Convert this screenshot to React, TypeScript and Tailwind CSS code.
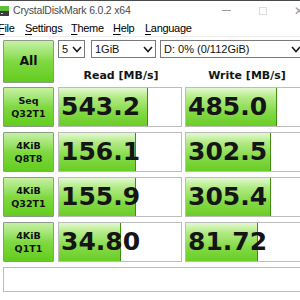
import React from "react";

type Row = {
  top: string;
  bottom: string;
  read: string;
  write: string;
  readFill: number;
  writeFill: number;
};

const rows: Row[] = [
  { top: "Seq", bottom: "Q32T1", read: "543.2", write: "485.0", readFill: 89, writeFill: 91 },
  { top: "4KiB", bottom: "Q8T8", read: "156.1", write: "302.5", readFill: 77, writeFill: 85 },
  { top: "4KiB", bottom: "Q32T1", read: "155.9", write: "305.4", readFill: 77, writeFill: 85 },
  { top: "4KiB", bottom: "Q1T1", read: "34.80", write: "81.72", readFill: 62, writeFill: 72 },
];

const Chevron = () => (
  <svg width="10" height="7" viewBox="0 0 10 7" className="shrink-0">
    <polyline points="1,1 5,5.5 9,1" fill="none" stroke="#1a1a1a" strokeWidth="1.6" />
  </svg>
);

const Select = ({ value, className }: { value: string; className: string }) => (
  <div
    className={`h-[18px] border border-[#7a7a7a] bg-white flex items-center justify-between pl-[3px] pr-[2px] text-[11px] text-[#111] ${className}`}
  >
    <span>{value}</span>
    <Chevron />
  </div>
);

const LabelButton = ({ children, big }: { children: React.ReactNode; big?: boolean }) => (
  <div
    className={`w-[51px] shrink-0 border border-[#8c9a8c] rounded-[1px] bg-gradient-to-b from-[#c6f1a2] via-[#7fd93f] to-[#62cc1c] flex flex-col items-center justify-center font-bold text-[#111] font-['DejaVu_Sans',sans-serif] ${
      big ? "h-[43px] text-[12.5px]" : "h-[40px] text-[9.5px] leading-[13px]"
    }`}
  >
    {children}
  </div>
);

const ValueBox = ({ value, fill, className }: { value: string; fill: number; className: string }) => (
  <div className={`relative w-[124px] h-[40px] shrink-0 border border-[#bcbcbc] bg-white overflow-hidden ${className}`}>
    <div
      className="absolute left-0 top-0 bottom-0 border-r border-[#3f8f12] bg-[linear-gradient(to_bottom,#e4f8d2_0%,#b2eb84_25%,#82d944_65%,#6acd26_100%)]"
      style={{ width: fill }}
    />
    <span className="relative block pl-[2px] leading-[38px] text-[25px] font-bold text-[#151515] font-['DejaVu_Sans',sans-serif]">
      {value}
    </span>
  </div>
);

const MenuItem = ({ label, width, className = "" }: { label: string; width: string; className?: string }) => (
  <span className={`${width} shrink-0 ${className}`}>
    <span className="underline underline-offset-[2px]">{label[0]}</span>
    {label.slice(1)}
  </span>
);

export default function App() {
  return (
    <div className="w-[300px] h-[300px] overflow-hidden bg-white font-['Liberation_Sans',Arial,sans-serif]">
      <div className="w-[320px]">
        {/* title bar */}
        <div className="h-[20px] border-t border-[#4b4b4b] flex items-center">
          <svg width="10" height="12" viewBox="0 0 10 12" className="shrink-0 mt-[1px]">
            <rect x="0" y="1" width="9" height="5" fill="#5fbf3a" />
            <rect x="0" y="6" width="9" height="5" fill="#3c3c3c" />
            <rect x="1" y="8" width="2" height="1" fill="#d0d0d0" />
          </svg>
          <span className="ml-[3px] text-[10.5px] tracking-[-0.2px] text-[#4a4a4a]">CrystalDiskMark 6.0.2 x64</span>
          <div className="ml-auto flex items-center w-[98px] shrink-0">
            <div className="w-[9px] h-px bg-[#9a9a9a]" />
            <div className="ml-[28px] w-[8px] h-[8px] border border-[#dcdcdc]" />
            <span className="ml-[27px] text-[12px] leading-none text-[#9a9a9a]">✕</span>
          </div>
        </div>

        {/* menu bar */}
        <div className="h-[17px] border-b border-[#ececec] flex items-center text-[11px] tracking-[-0.3px] text-[#000]">
          <MenuItem label="File" width="w-[27px]" className="-ml-[2px]" />
          <MenuItem label="Settings" width="w-[46px]" />
          <MenuItem label="Theme" width="w-[42px]" />
          <MenuItem label="Help" width="w-[32px]" />
          <MenuItem label="Language" width="w-[60px]" />
        </div>

        {/* body */}
        <div className="pl-[3px] pt-[3px]">
          <div className="flex">
            <LabelButton big>All</LabelButton>
            <div className="ml-[4px] flex flex-col">
              <div className="flex">
                <Select value="5" className="w-[27px]" />
                <Select value="1GiB" className="ml-[6px] w-[65px]" />
                <Select value="D: 0% (0/112GiB)" className="ml-[4px] w-[144px]" />
              </div>
              <div className="h-[25px] flex items-end text-[11px] leading-[14px] font-bold text-[#151515] font-['DejaVu_Sans',sans-serif]">
                <div className="w-[124px] text-center pl-[2px]">Read [MB/s]</div>
                <div className="ml-[3px] w-[124px] text-center">Write [MB/s]</div>
              </div>
            </div>
          </div>

          <div className="mt-[4px] flex flex-col gap-[5px]">
            {rows.map((r) => (
              <div key={r.top + r.bottom} className="flex">
                <LabelButton>
                  <span>{r.top}</span>
                  <span>{r.bottom}</span>
                </LabelButton>
                <ValueBox value={r.read} fill={r.readFill} className="ml-[4px]" />
                <ValueBox value={r.write} fill={r.writeFill} className="ml-[3px]" />
              </div>
            ))}
          </div>

          {/* comment */}
          <div className="mt-[5px] w-[306px] h-[25px] border border-[#bcbcbc] bg-white" />
        </div>
      </div>
    </div>
  );
}
